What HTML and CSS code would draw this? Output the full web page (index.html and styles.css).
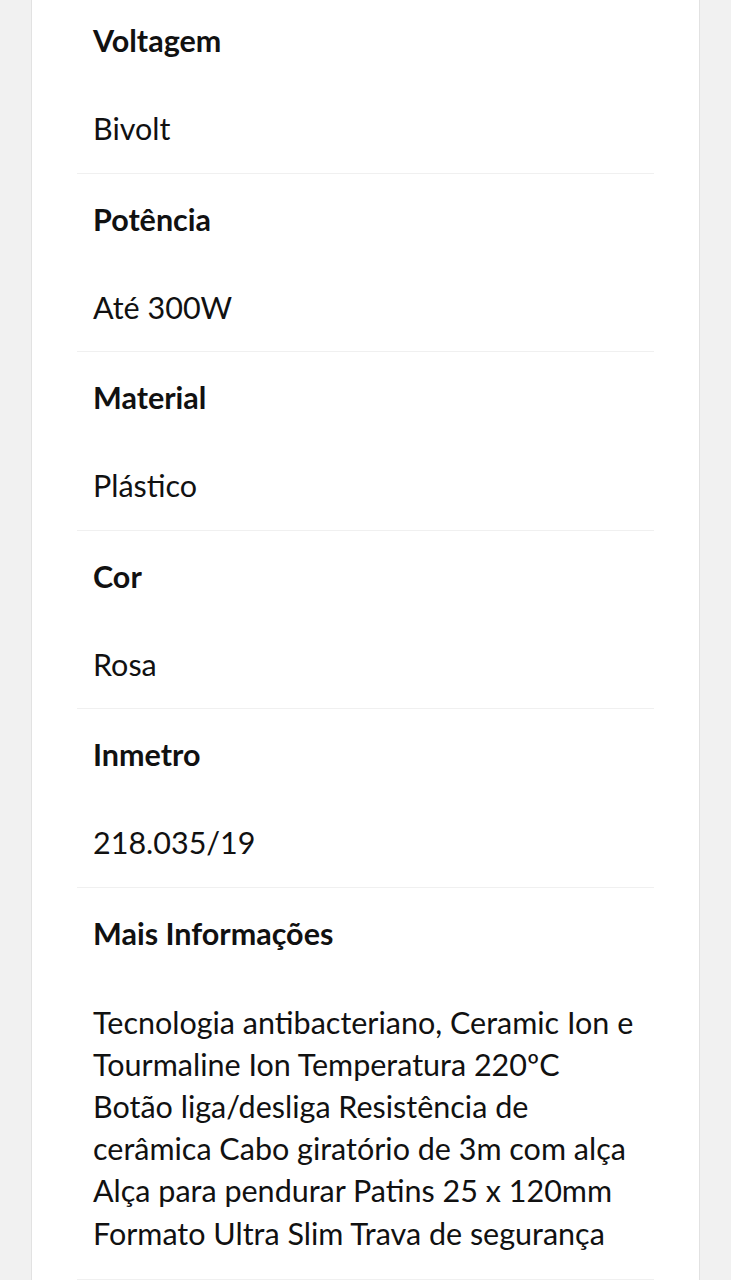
FILE: index.html
```html
<!DOCTYPE html>
<html lang="pt-BR">
  <head>
    <meta charset="UTF-8" />
    <meta name="viewport" content="width=device-width, initial-scale=1.0" />
    <title>Especificações</title>
    <link rel="stylesheet" href="styles.css">
  </head>
  <body>
    <div class="card">
      <dl class="specs">
        <div class="spec">
          <dt>Voltagem</dt>
          <dd>Bivolt</dd>
        </div>
        <div class="spec">
          <dt>Potência</dt>
          <dd>Até 300W</dd>
        </div>
        <div class="spec">
          <dt>Material</dt>
          <dd>Plástico</dd>
        </div>
        <div class="spec">
          <dt>Cor</dt>
          <dd>Rosa</dd>
        </div>
        <div class="spec">
          <dt>Inmetro</dt>
          <dd>218.035/19</dd>
        </div>
        <div class="spec spec-long">
          <dt>Mais Informações</dt>
          <dd>
            Tecnologia antibacteriano, Ceramic Ion e Tourmaline Ion Temperatura
            220ºC Botão liga/desliga Resistência de cerâmica Cabo giratório de
            3m com alça Alça para pendurar Patins 25 x 120mm Formato Ultra Slim
            Trava de segurança
          </dd>
        </div>
      </dl>
    </div>
  </body>
</html>
```

FILE: styles.css
```css
* {
  margin: 0;
  padding: 0;
  box-sizing: border-box;
}

body {
  font-family: Lato, "Liberation Sans", sans-serif;
  background: #f1f1f1;
  color: #111;
  overflow: hidden;
}

.card {
  margin: 0 31px;
  min-height: 1280px;
  background: #fff;
  border-left: 1px solid #e2e2e2;
  border-right: 1px solid #e2e2e2;
  padding: 0 45px;
}

.specs {
  margin-top: -5px;
}

.spec {
  padding: 24px 16px 22.5px;
  border-bottom: 1px solid #f0f0f0;
  font-size: 30.5px;
  line-height: 43px;
}

.spec dt {
  font-weight: 700;
}

.spec dd {
  margin-top: 45px;
  font-weight: 400;
}

.spec-long {
  padding-bottom: 25px;
}

.spec-long dd {
  margin-top: 46px;
  line-height: 42.2px;
}
```
